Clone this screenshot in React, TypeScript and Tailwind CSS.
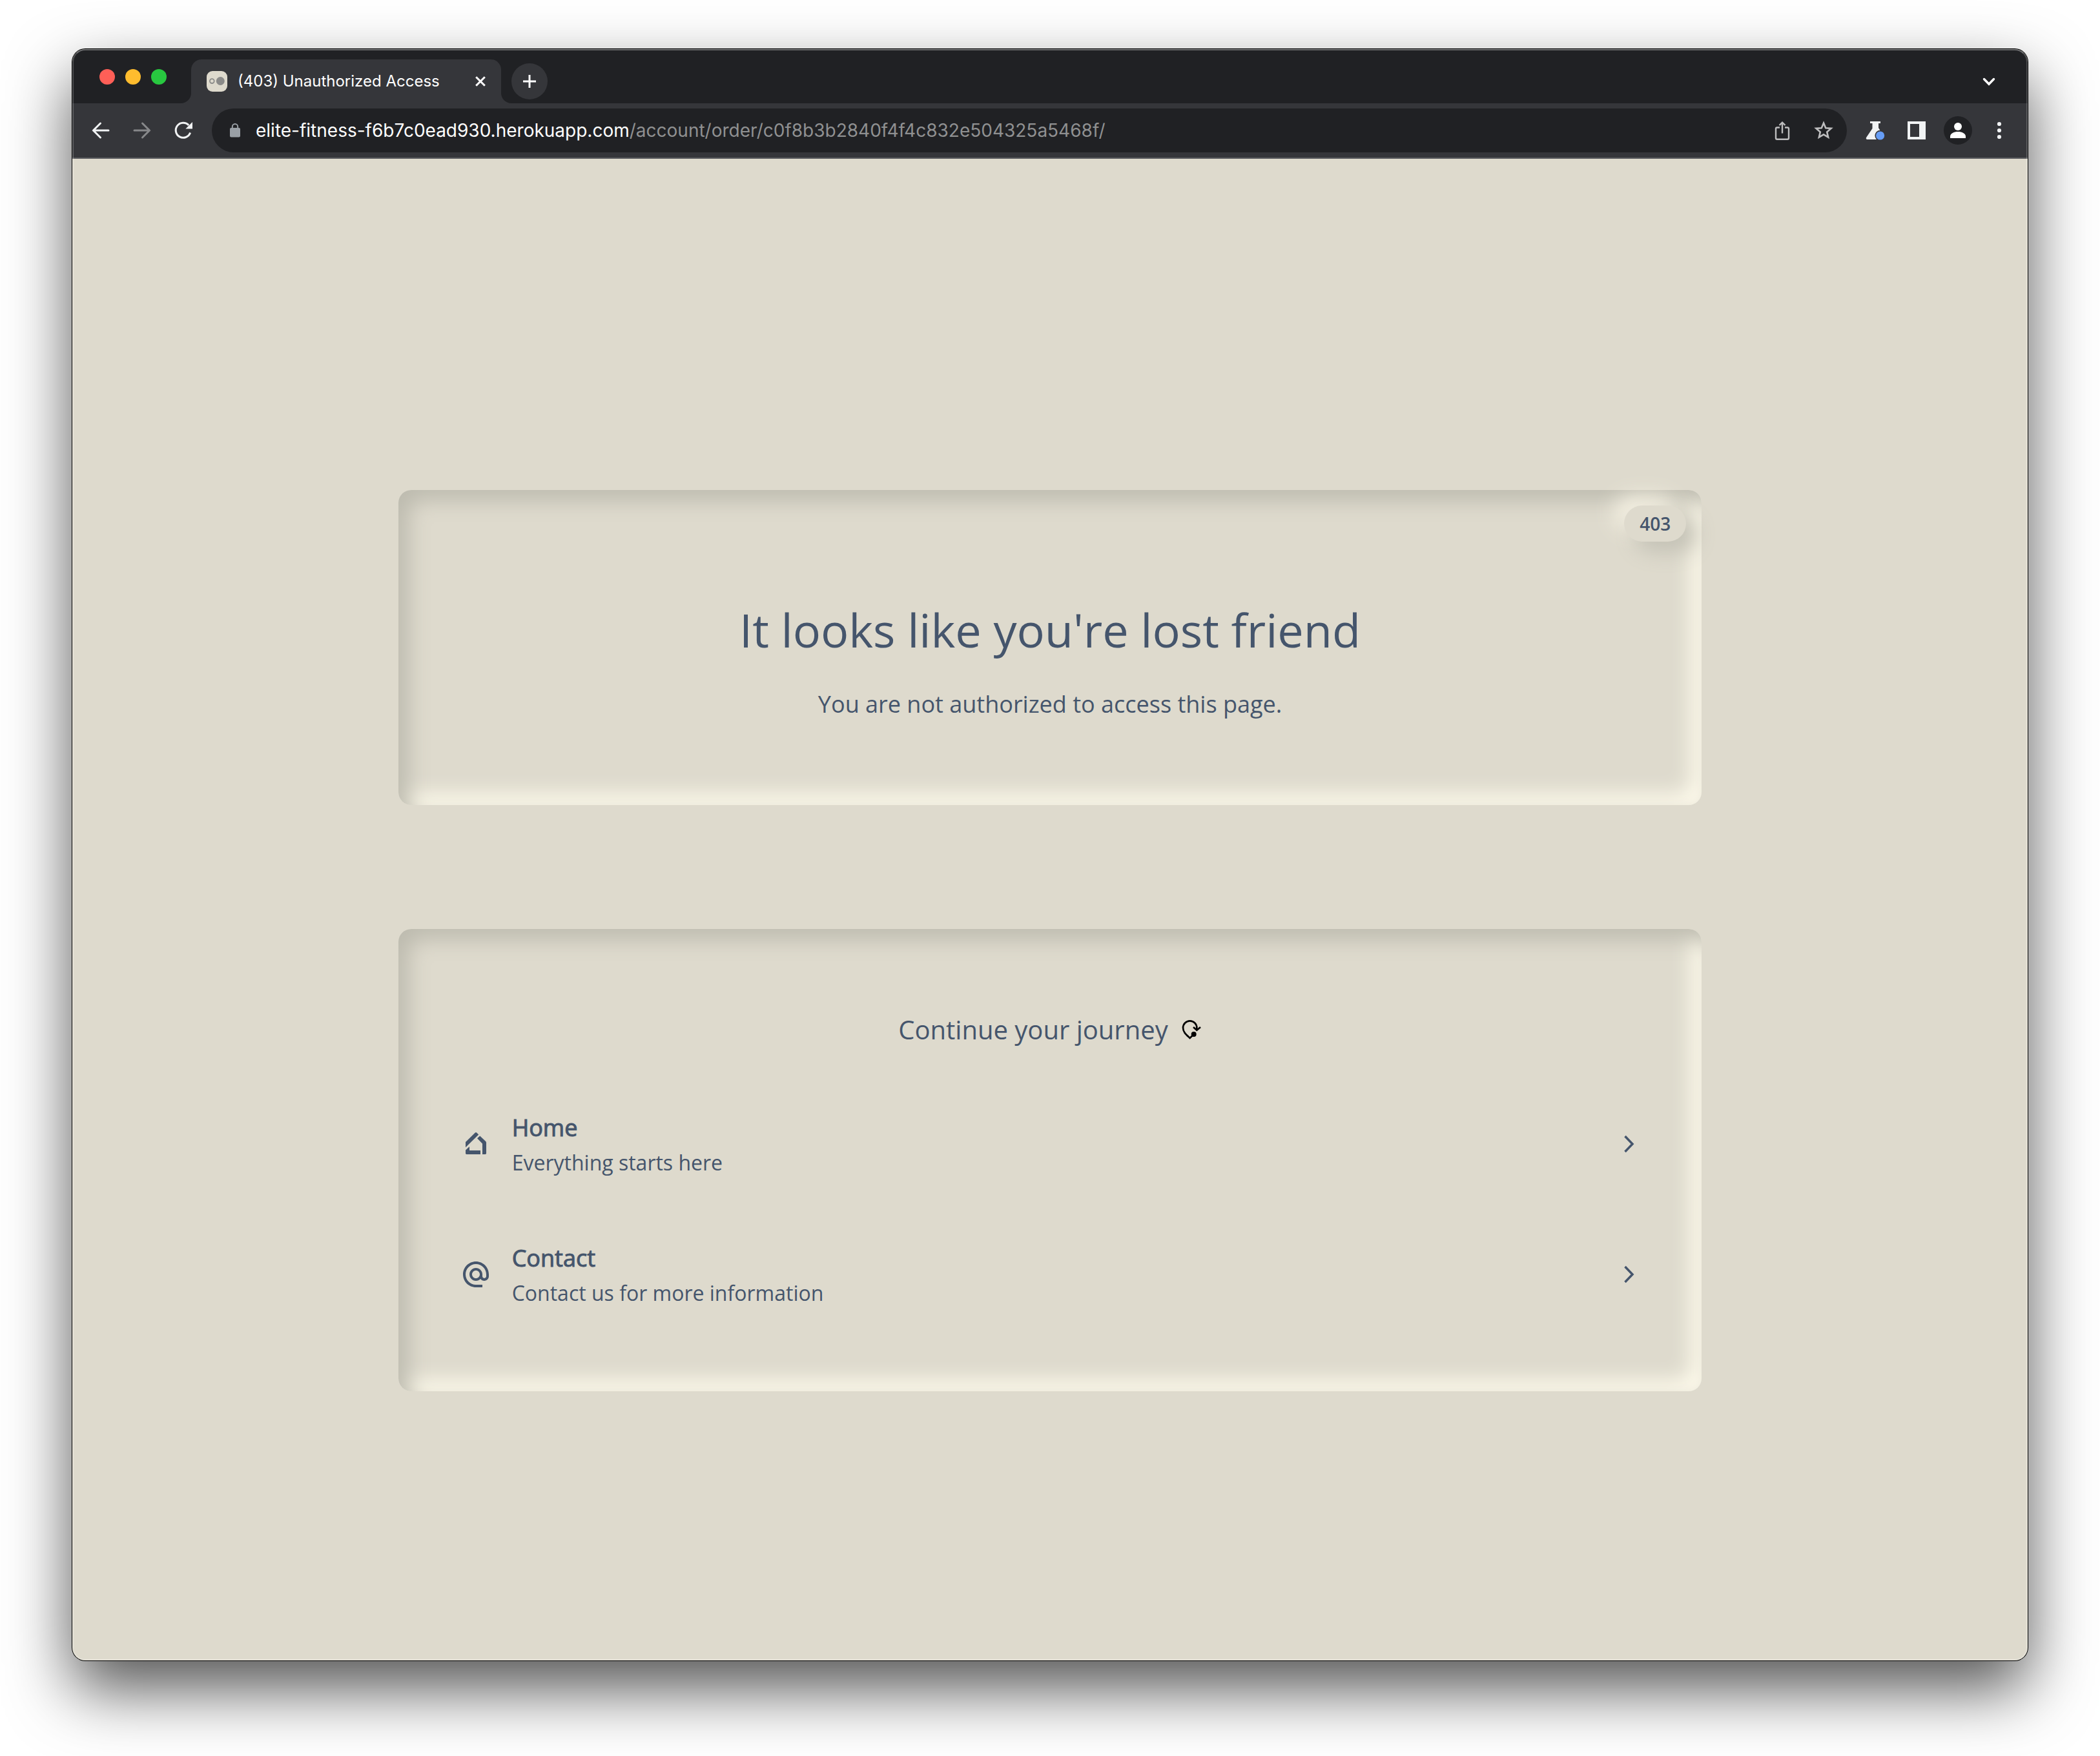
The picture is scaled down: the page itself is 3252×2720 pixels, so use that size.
import React from "react";

type IconProps = { children: React.ReactNode; className?: string };

function Glyph({ children, className = "" }: IconProps) {
  return (
    <svg
      viewBox="0 0 40 40"
      fill="none"
      aria-hidden="true"
      className={`size-10 shrink-0 ${className}`}
    >
      {children}
    </svg>
  );
}

function TabStrip() {
  return (
    <div className="flex h-[84px] items-end bg-[#202124] pl-[42px] pr-10">
      <div className="mb-[29px] flex gap-4">
        <button aria-label="Close window" className="size-6 rounded-full bg-[#ff5f57]" />
        <button aria-label="Minimize window" className="size-6 rounded-full bg-[#febc2e]" />
        <button aria-label="Zoom window" className="size-6 rounded-full bg-[#28c840]" />
      </div>
      <div className="relative ml-[38px] flex h-[68px] w-[480px] items-center rounded-t-2xl bg-[#35363a] px-6">
        <span className="absolute bottom-0 right-full size-4 bg-[#35363a]">
          <span className="block size-4 rounded-br-2xl bg-[#202124]" />
        </span>
        <span className="absolute bottom-0 left-full size-4 bg-[#35363a]">
          <span className="block size-4 rounded-bl-2xl bg-[#202124]" />
        </span>
        <svg viewBox="0 0 32 32" className="size-8 shrink-0" aria-hidden="true">
          <rect width="32" height="32" rx="9" fill="#dedacd" />
          <circle cx="8.3" cy="15.6" r="3.4" fill="none" stroke="#8b8b89" strokeWidth="1.8" />
          <circle cx="21.3" cy="15.5" r="6.5" fill="#8b8b89" />
        </svg>
        <span className="ml-4 flex-1 whitespace-nowrap text-[24px] leading-8 text-white">
          (403) Unauthorized Access
        </span>
        <button aria-label="Close tab" className="flex size-4 items-center justify-center">
          <svg viewBox="0 0 16 16" className="size-4" aria-hidden="true">
            <path d="M1.2 1.2 14.8 14.8M14.8 1.2 1.2 14.8" stroke="#fff" strokeWidth="3" />
          </svg>
        </button>
      </div>
      <button
        aria-label="New tab"
        className="mb-1.5 ml-4 flex size-14 items-center justify-center rounded-full bg-[#35363a]"
      >
        <svg viewBox="0 0 20 20" className="size-5" aria-hidden="true">
          <path d="M10 0V20M0 10H20" stroke="#fff" strokeWidth="3" />
        </svg>
      </button>
      <button aria-label="Search tabs" className="mb-3.5 ml-auto">
        <Glyph>
          <path
            d="M12.5 16.5 20 24.2 27.5 16.5"
            stroke="#fff"
            strokeWidth="3.4"
            strokeLinecap="round"
          />
        </Glyph>
      </button>
    </div>
  );
}

function Toolbar() {
  return (
    <div className="flex h-[86px] items-center gap-6 border-b-2 border-[#5d5e61] bg-[#35363a] px-6">
      <button aria-label="Back">
        <Glyph>
          <path
            d="M19.5 9 8.5 20 19.5 31M8.5 20H32"
            stroke="#f1f3f4"
            strokeWidth="3"
            strokeLinecap="round"
          />
        </Glyph>
      </button>
      <button aria-label="Forward">
        <Glyph>
          <path
            d="M20.5 9 31.5 20 20.5 31M31.5 20H8"
            stroke="#87888a"
            strokeWidth="3"
            strokeLinecap="round"
          />
        </Glyph>
      </button>
      <button aria-label="Reload">
        <Glyph>
          <path d="M30.6 23.5A11.5 11.5 0 1 1 28.2 12" stroke="#f1f3f4" strokeWidth="3" />
          <path d="M34 7V17.6H23.4Z" fill="#f1f3f4" />
        </Glyph>
      </button>
      <div className="flex h-[68px] min-w-0 flex-1 items-center gap-6 rounded-full bg-[#202124] pl-7 pr-4">
        <svg viewBox="0 0 16 22" className="h-[22px] w-4 shrink-0" aria-hidden="true">
          <rect y="7" width="16" height="14.4" rx="2" fill="#9aa0a6" />
          <path d="M3.8 8V5.2a4.2 4.2 0 0 1 8.4 0V8" fill="none" stroke="#9aa0a6" strokeWidth="2" />
        </svg>
        <div
          role="textbox"
          aria-label="Address"
          className="min-w-0 flex-1 overflow-hidden whitespace-nowrap text-[28px] leading-9 text-[#8f9091]"
        >
          <span className="text-white">elite-fitness-f6b7c0ead930.herokuapp.com</span>
          /account/order/c0f8b3b2840f4f4c832e504325a5468f/
        </div>
        <button aria-label="Share">
          <Glyph>
            <path
              d="M16 15.5H12a2 2 0 0 0-2 2V31.7a2 2 0 0 0 2 2H28a2 2 0 0 0 2-2V17.5a2 2 0 0 0-2-2H24"
              stroke="#bdbdbe"
              strokeWidth="2.4"
            />
            <path
              d="M20 24.5V8M15.5 12 20 7.6 24.5 12"
              stroke="#bdbdbe"
              strokeWidth="2.4"
            />
          </Glyph>
        </button>
        <button aria-label="Bookmark">
          <Glyph>
            <path
              d="M20 8.6 23.2 16.2 31.6 16.9 25.2 22.4 27.1 30.6 20 26.3 12.9 30.6 14.8 22.4 8.4 16.9 16.8 16.2Z"
              stroke="#bdbdbe"
              strokeWidth="2.6"
            />
          </Glyph>
        </button>
      </div>
      <button aria-label="Labs">
        <Glyph>
          <path
            d="M12 6H28V9H25V16L34 30.5C35 32.5 34 34 32 34H8C6 34 5 32.500 6.400 30.500L15.500 17V9H12Z"
            fill="#f1f3f4"
          />
          <path d="M27.6 19.800H40V40H27.600Z" fill="#35363a" />
          <circle cx="27.6" cy="28" r="8.2" fill="#35363a" />
          <circle cx="27.6" cy="28" r="6.6" fill="#669df6" />
        </Glyph>
      </button>
      <button aria-label="Side panel">
        <Glyph>
          <path fillRule="evenodd" d="M6 6H34V34H6ZM10 10V30H24V10Z" fill="#f1f3f4" />
        </Glyph>
      </button>
      <button
        aria-label="Profile"
        className="-mx-0.5 flex size-11 items-center justify-center rounded-full bg-[#202124]"
      >
        <Glyph>
          <circle cx="20" cy="14" r="6" fill="#fff" />
          <path d="M8 32V29.500C8 24.500 14 22 20 22S32 24.500 32 29.500V32Z" fill="#fff" />
        </Glyph>
      </button>
      <button aria-label="Menu">
        <Glyph>
          <circle cx="20" cy="10" r="3.100" fill="#f1f3f4" />
          <circle cx="20" cy="20" r="3.100" fill="#f1f3f4" />
          <circle cx="20" cy="30" r="3.100" fill="#f1f3f4" />
        </Glyph>
      </button>
    </div>
  );
}

function Card({ children, className = "" }: IconProps) {
  return (
    <section
      className={`relative w-2/3 rounded-[20px] shadow-[inset_16px_16px_32px_#bdbbaf,inset_-16px_-16px_32px_#fffced] ${className}`}
    >
      {children}
    </section>
  );
}

function HomeIcon() {
  return (
    <svg viewBox="0 0 24 24" fill="currentColor" className="size-12 shrink-0" aria-hidden="true">
      <path d="M4 10.500 11.400 3.250Q12 2.750 12.600 3.250L14.100 4.700 4 14.600Z" />
      <path d="M13 7.600 15.100 5.700 19.600 10Q20 10.400 20 11V19.300Q20 20 19.300 20H17V11.700Z" />
      <path d="M4 16.700 7 14V17H15.500V20H4.700Q4 20 4 19.300Z" />
    </svg>
  );
}

function AtIcon() {
  return (
    <svg viewBox="0 0 24 24" fill="currentColor" className="size-12 shrink-0" aria-hidden="true">
      <path d="M12 2C6.480 2 2 6.480 2 12s4.480 10 10 10h5v-2h-5c-4.340 0-8-3.660-8-8s3.660-8 8-8 8 3.660 8 8v1.430c0 .79-.71 1.570-1.500 1.570s-1.500-.78-1.500-1.570V12c0-2.760-2.240-5-5-5s-5 2.240-5 5 2.240 5 5 5c1.380 0 2.640-.56 3.540-1.470.65.890 1.770 1.470 2.960 1.470 1.970 0 3.500-1.600 3.500-3.570V12c0-5.520-4.480-10-10-10zm0 13c-1.660 0-3-1.340-3-3s1.340-3 3-3 3 1.340 3 3-1.340 3-3 3z" />
    </svg>
  );
}

function JourneyLink({
  icon,
  title,
  text,
}: {
  icon: React.ReactNode;
  title: string;
  text: string;
}) {
  return (
    <li>
      <a href="#" className="flex items-center gap-8">
        {icon}
        <span className="flex-1">
          <span className="block text-[36px] font-medium leading-[56px] [-webkit-text-stroke:1px_currentColor]">
            {title}
          </span>
          <span className="mt-0.5 block text-[32px] leading-12">{text}</span>
        </span>
        <svg viewBox="0 0 48 48" fill="none" className="-mr-5 size-12 shrink-0" aria-hidden="true">
          <path d="M5.500 12 17 24 5.500 36" stroke="currentColor" strokeWidth="3.500" />
        </svg>
      </a>
    </li>
  );
}

export default function App() {
  return (
    <div className="flex min-h-screen flex-col bg-white px-28 pb-[148px] pt-[76px] font-['Inter',sans-serif]">
      <div className="relative flex flex-1 flex-col overflow-hidden rounded-[20px] bg-[#dedacd] shadow-[0_0_0_1px_#000,0_44px_100px_rgba(0,0,0,0.68)]">
        <TabStrip />
        <Toolbar />
        <main className="flex flex-1 flex-col items-center justify-center gap-48 pt-24 font-['Open_Sans',sans-serif] text-slate-600">
          <Card className="p-32 text-center">
            <span className="absolute right-6 top-6 rounded-full bg-[#dedacd] px-6 py-2 text-[28px] font-semibold leading-10 shadow-[16px_16px_32px_#c4c2b6,-16px_-16px_32px_#f4f0e2]">
              403
            </span>
            <h1 className="mt-12 text-7xl leading-[80px]">It looks like you&#39;re lost friend</h1>
            <p className="mt-12 text-[36px] leading-[56px]">
              You are not authorized to access this page.
            </p>
          </Card>
          <Card className="px-24 py-32">
            <h2 className="flex items-center justify-center gap-5 text-[40px] leading-[56px]">
              Continue your journey
              <svg
                viewBox="0 0 96 96"
                fill="none"
                stroke="#000"
                strokeWidth="8"
                className="size-8"
                aria-hidden="true"
              >
                <path d="M73 46V39A32 32 0 0 0 9 39C9 60 25 72 41 87L58 70" />
                <path d="M57 36 73 50 90 36" />
                <circle cx="59" cy="69" r="12" fill="#000" stroke="none" />
              </svg>
            </h2>
            <ul className="mt-24 flex flex-col gap-24">
              <JourneyLink icon={<HomeIcon />} title="Home" text="Everything starts here" />
              <JourneyLink icon={<AtIcon />} title="Contact" text="Contact us for more information" />
            </ul>
          </Card>
        </main>
        <div className="pointer-events-none absolute inset-0 rounded-[20px] border-2 border-white/20 border-t-white/35" />
      </div>
    </div>
  );
}
